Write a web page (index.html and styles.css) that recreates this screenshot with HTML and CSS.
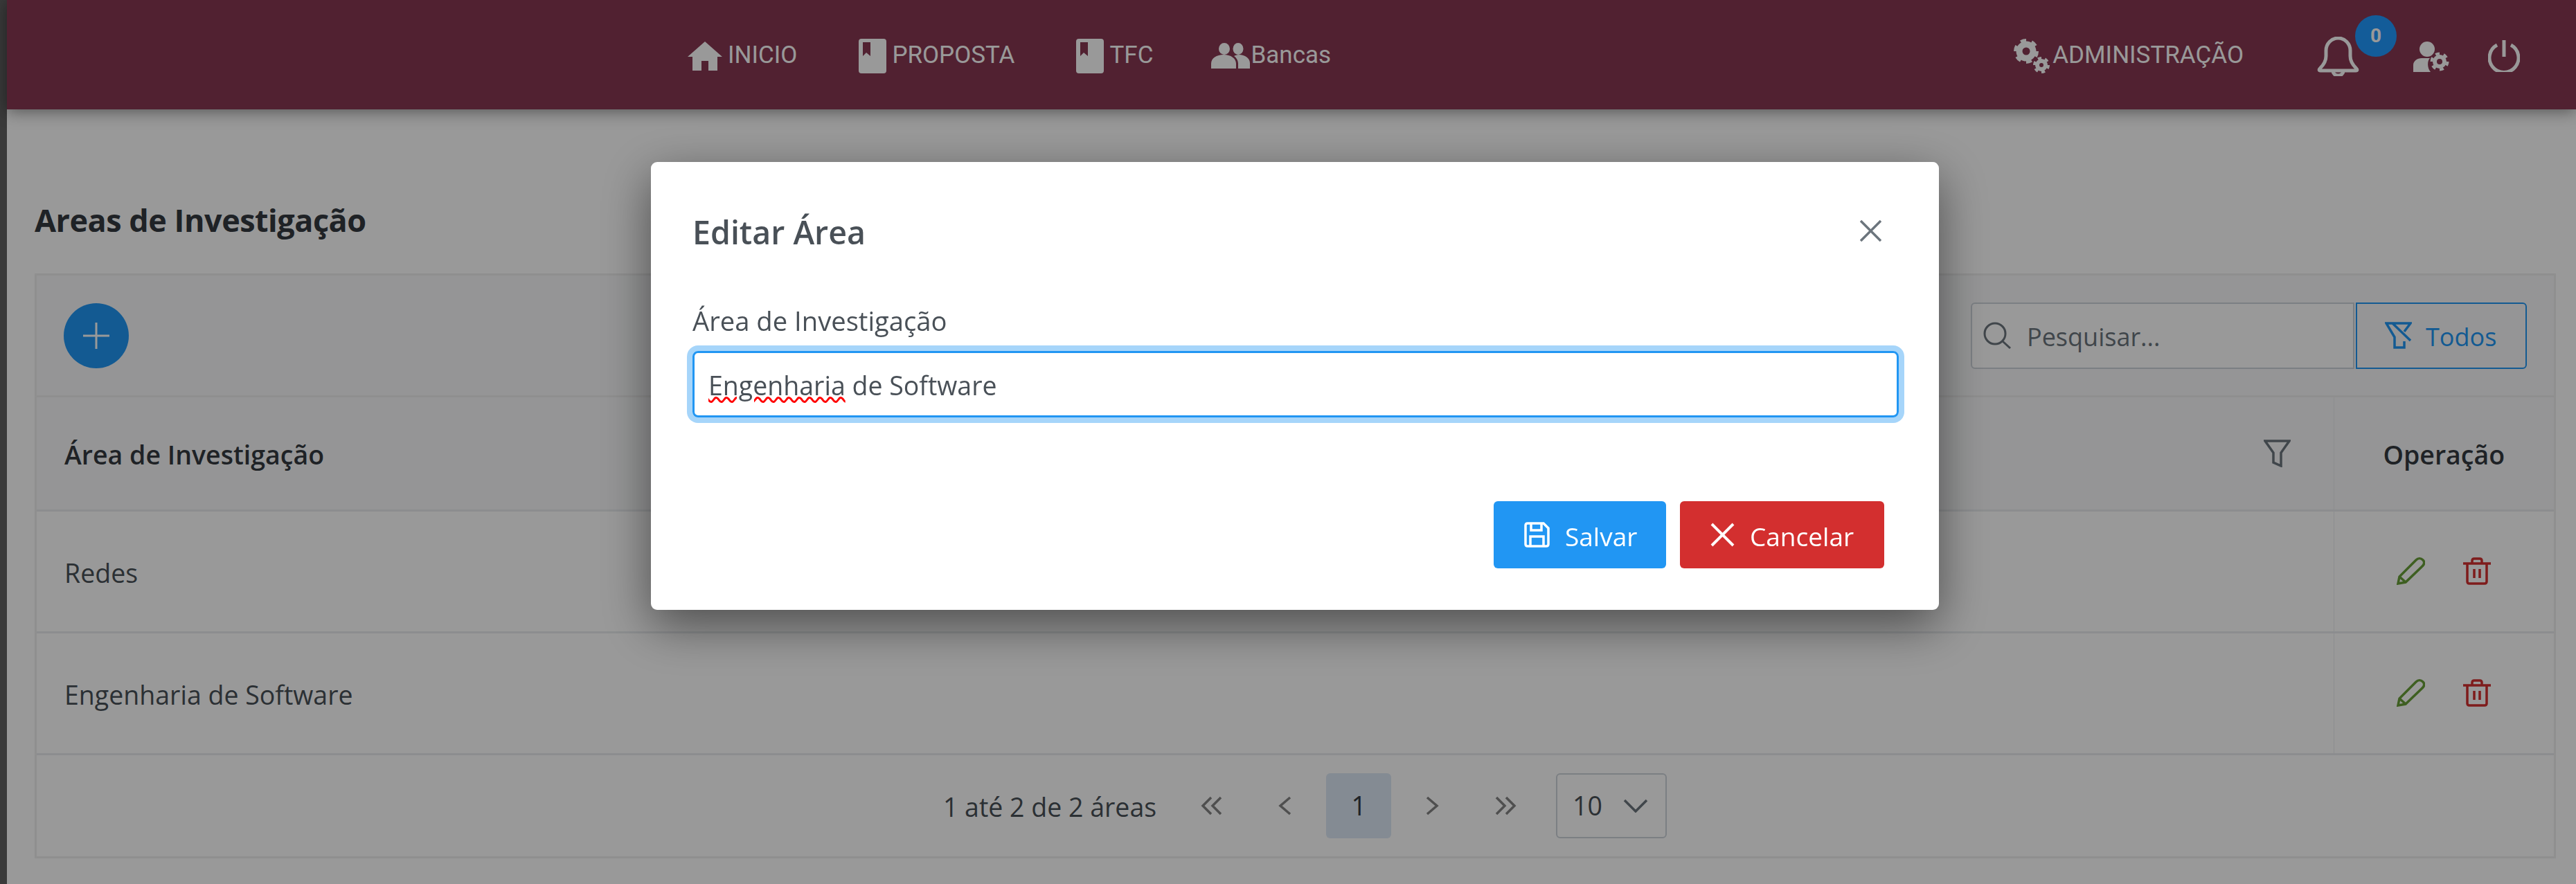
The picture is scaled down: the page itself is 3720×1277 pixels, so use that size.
FILE: index.html
```html
<!DOCTYPE html>
<html lang="en">
<head>
  <meta charset="UTF-8" />
  <title>Areas de Investigação</title>
  <link rel="stylesheet" href="styles.css">
</head>
<body>
  <div class="strip"></div>
  <div class="page">
    <nav class="navbar">
      <div class="nav-main">
        <a class="nav-item">
          <svg class="i-home" viewBox="0 0 50 42"><path d="M25 0 50 22H43V42H30V28H20V42H7V22H0Z"/></svg>
          <span>INICIO</span>
        </a>
        <a class="nav-item">
          <svg class="i-book" viewBox="0 0 40 50"><path fill-rule="evenodd" d="M4 0H36Q40 0 40 4V46Q40 50 36 50H4Q0 50 0 46V4Q0 0 4 0ZM6 5V25L11 20 17 25V5Z"/></svg>
          <span>PROPOSTA</span>
        </a>
        <a class="nav-item">
          <svg class="i-book" viewBox="0 0 40 50"><path fill-rule="evenodd" d="M4 0H36Q40 0 40 4V46Q40 50 36 50H4Q0 50 0 46V4Q0 0 4 0ZM6 5V25L11 20 17 25V5Z"/></svg>
          <span>TFC</span>
        </a>
        <a class="nav-item nav-bancas">
          <svg class="i-users" viewBox="0 0 57 37"><ellipse cx="19" cy="8.500" rx="8" ry="8.500"/><ellipse cx="39" cy="8.500" rx="7.500" ry="8.500"/><path d="M0 37V30C0 22 8 17 18 17S36 22 36 30V37ZM39 37V30C39 25 36 21 33 19 35 18 37 17 40 17 49 17 56 22 56 29V37Z"/></svg>
          <span>Bancas</span>
        </a>
      </div>
      <div class="nav-side">
        <a class="nav-item nav-admin">
          <svg class="i-gears" viewBox="0 0 52 50">
            <g class="gear"><circle cx="18" cy="18" r="10" stroke-width="9"/><circle class="teeth" cx="18" cy="18" r="15.500" stroke-width="5" pathLength="48" stroke-dasharray="4 4"/></g>
            <g class="gear"><circle cx="40" cy="38" r="6" stroke-width="6"/><circle class="teeth" cx="40" cy="38" r="10" stroke-width="4" pathLength="48" stroke-dasharray="4 4"/></g>
          </svg>
          <span>ADMINISTRAÇÃO</span>
        </a>
        <div class="bell">
          <svg class="i-bell" viewBox="0 0 61 57"><path d="M5 45C10 40 13 35 13 28V20C13 10 21 2 30.500 2S48 10 48 20V28C48 35 51 40 56 45 59 48 58 49 56 49H5C3 49 2 48 5 45ZM23 50A7.500 6 0 0 0 38 50"/></svg>
          <span class="badge">0</span>
        </div>
        <svg class="i-usercog" viewBox="0 0 52 44">
          <ellipse cx="20" cy="11" rx="11" ry="11"/>
          <path d="M0 44V34C0 28 6 24 12 24H24C20 28 20 38 25 44Z"/>
          <g class="gear"><circle cx="38" cy="29" r="7" stroke-width="6"/><circle class="teeth" cx="38" cy="29" r="11.500" stroke-width="4" pathLength="48" stroke-dasharray="4 4"/></g>
        </svg>
        <svg class="i-power" viewBox="0 0 46 46"><path d="M13 7A21 21 0 1 0 33 7M23 0V24"/></svg>
      </div>
    </nav>

    <main class="content">
      <h1 class="page-title">Areas de Investigação</h1>
      <section class="card">
        <div class="toolbar">
          <button class="btn-add">
            <svg viewBox="0 0 38 38"><path d="M19 0V38M0 19H38"/></svg>
          </button>
          <div class="search-group">
            <div class="search">
              <svg class="i-search" viewBox="0 0 41 39"><circle cx="17" cy="17" r="15"/><path d="M28 28 39 38"/></svg>
              <span>Pesquisar...</span>
            </div>
            <button class="btn-todos">
              <svg class="i-funnel" viewBox="0 0 39 39"><path d="M28 14 37 2H2L14 22V37H28V28M11 2 37 27"/></svg>
              <span>Todos</span>
            </button>
          </div>
        </div>
        <table class="grid">
          <thead>
            <tr>
              <th>
                <div class="th-inner">
                  <span>Área de Investigação</span>
                  <svg class="i-filter" viewBox="0 0 39 40"><path d="M2 2H37L25 19V38L14 33V19Z"/></svg>
                </div>
              </th>
              <th class="col-op">Operação</th>
            </tr>
          </thead>
          <tbody>
            <tr>
              <td>Redes</td>
              <td class="col-op">
                <div class="ops">
                  <svg class="i-pencil" viewBox="0 0 41 40"><path d="M2 38 4 28 28 4C31 1 35 1 38 4S40 10 37 13L13 36ZM4 28 13 36"/></svg>
                  <svg class="i-trash" viewBox="0 0 40 40"><path d="M0 9H40M6 9V35Q6 38 9 38H31Q34 38 34 35V9M13 9V5Q13 2 16 2H24Q27 2 27 5V9M16 17V30M24 17V30"/></svg>
                </div>
              </td>
            </tr>
            <tr>
              <td>Engenharia de Software</td>
              <td class="col-op">
                <div class="ops">
                  <svg class="i-pencil" viewBox="0 0 41 40"><path d="M2 38 4 28 28 4C31 1 35 1 38 4S40 10 37 13L13 36ZM4 28 13 36"/></svg>
                  <svg class="i-trash" viewBox="0 0 40 40"><path d="M0 9H40M6 9V35Q6 38 9 38H31Q34 38 34 35V9M13 9V5Q13 2 16 2H24Q27 2 27 5V9M16 17V30M24 17V30"/></svg>
                </div>
              </td>
            </tr>
          </tbody>
        </table>
        <div class="paginator">
          <span class="page-info">1 até 2 de 2 áreas</span>
          <a class="page-btn"><svg viewBox="0 0 32 32"><path d="M15 4 3 16 15 28M29 4 17 16 29 28"/></svg></a>
          <a class="page-btn"><svg viewBox="0 0 32 32"><path d="M23 4 9 16 23 28"/></svg></a>
          <a class="page-btn page-on">1</a>
          <a class="page-btn"><svg viewBox="0 0 32 32"><path d="M9 4 23 16 9 28"/></svg></a>
          <a class="page-btn"><svg viewBox="0 0 32 32"><path d="M3 4 15 16 3 28M17 4 29 16 17 28"/></svg></a>
          <div class="page-size">
            <span>10</span>
            <svg viewBox="0 0 36 20"><path d="M2 2 18 18 34 2"/></svg>
          </div>
        </div>
      </section>
    </main>
  </div>

  <div class="backdrop"></div>

  <div class="modal">
    <div class="modal-head">
      <h2 class="modal-title">Editar Área</h2>
      <svg class="i-close" viewBox="0 0 31 31"><path d="M1 1 30 30M30 1 1 30"/></svg>
    </div>
    <div class="modal-body">
      <label class="field-label">Área de Investigação</label>
      <div class="field-input"><span class="misspelt">Engenharia</span> de Software</div>
    </div>
    <div class="modal-foot">
      <button class="btn btn-save">
        <svg class="i-save" viewBox="0 0 37 37"><path d="M5 2H28L35 9V32Q35 35 32 35H5Q2 35 2 32V5Q2 2 5 2ZM10 2V12H25V2M9 35V21H28V35"/></svg>
        <span>Salvar</span>
      </button>
      <button class="btn btn-cancel">
        <svg class="i-x" viewBox="0 0 35 35"><path d="M2 2 33 33M33 2 2 33"/></svg>
        <span>Cancelar</span>
      </button>
    </div>
  </div>
</body>
</html>
```

FILE: styles.css
```css
* {
  box-sizing: border-box;
}
html, body {
  margin: 0;
  height: 100%;
}
body {
  display: flex;
  background: #fff;
  color: #495057;
  font-family: "Open Sans", "Noto Sans", sans-serif;
  font-size: 37.5px;
  overflow: hidden;
}
svg {
  display: block;
  flex: none;
}
button {
  font: inherit;
  border: none;
  padding: 0;
}

.strip {
  width: 10px;
  background: #616161;
  flex: none;
}
.page {
  flex: 1;
  min-width: 0;
}

/* navbar */
.navbar {
  height: 158px;
  background: #883752;
  box-shadow: 0 3px 22px rgba(0,0,0,0.45);
  display: flex;
  align-items: center;
  justify-content: space-between;
  padding: 0 81px 0 983px;
  color: #fff;
  fill: #fff;
  font-family: Roboto, sans-serif;
  font-size: 35px;
}
.nav-main, .nav-side {
  display: flex;
  align-items: center;
}
.nav-main {
  gap: 89px;
}
.nav-item {
  display: flex;
  align-items: center;
  gap: 8px;
}
.nav-bancas {
  margin-left: -5px;
  gap: 0;
}
.i-home {
  width: 50px;
  height: 42px;
  margin-top: 4px;
}
.i-book {
  width: 40px;
  height: 50px;
  margin-top: 4px;
}
.i-users {
  width: 57px;
  height: 37px;
  margin-top: 2px;
}
.i-gears {
  width: 52px;
  height: 50px;
  margin-top: 4px;
}
.nav-admin {
  gap: 4px;
}
.gear circle {
  fill: none;
  stroke: #fff;
}
.bell {
  margin-left: 106px;
  position: relative;
  height: 57px;
  margin-top: 4px;
}
.i-bell {
  width: 61px;
  height: 57px;
  fill: none;
  stroke: #fff;
  stroke-width: 5;
}
.badge {
  position: absolute;
  left: 55px;
  top: -31px;
  width: 60px;
  height: 60px;
  border-radius: 50%;
  background: #2099ff;
  font-size: 28px;
  font-weight: 700;
  display: flex;
  align-items: center;
  justify-content: center;
}
.i-usercog {
  width: 52px;
  height: 44px;
  margin-left: 78px;
  margin-top: 6px;
}
.i-power {
  width: 46px;
  height: 46px;
  margin-left: 56px;
  margin-top: 4px;
  fill: none;
  stroke: #fff;
  stroke-width: 5;
}

/* content */
.content {
  padding: 0 29px 0 40px;
}
.page-title {
  margin: 0;
  height: 237px;
  padding-top: 128px;
  font-size: 45px;
  font-weight: 700;
  line-height: 64px;
  color: #343a40;
  letter-spacing: -0.5px;
}
.card {
  border: 3px solid #eee;
}
.toolbar {
  height: 176px;
  background: #f8f9fa;
  border-bottom: 3px solid #eee;
  display: flex;
  align-items: center;
  justify-content: space-between;
  padding: 0 39px;
}
.btn-add {
  width: 94px;
  height: 94px;
  border-radius: 50%;
  background: #2196f3;
  display: flex;
  align-items: center;
  justify-content: center;
}
.btn-add svg {
  width: 38px;
  height: 38px;
  fill: none;
  stroke: #fff;
  stroke-width: 3;
}
.search-group {
  display: flex;
  gap: 2px;
  font-size: 36px;
}
.search {
  width: 554px;
  height: 96px;
  border: 2px solid #ced4da;
  border-radius: 6px 0 0 6px;
  background: #fff;
  display: flex;
  align-items: center;
  gap: 22px;
  padding-left: 16px;
  color: #6c757d;
}
.search span, .btn-todos span {
  padding-top: 3px;
}
.i-search {
  width: 41px;
  height: 39px;
  fill: none;
  stroke: #6c757d;
  stroke-width: 3;
}
.btn-todos {
  width: 247px;
  height: 96px;
  border: 2px solid #2196f3;
  border-radius: 0 6px 6px 0;
  background: transparent;
  color: #2196f3;
  display: flex;
  align-items: center;
  gap: 20px;
  padding-left: 40px;
}
.i-funnel {
  width: 39px;
  height: 39px;
  fill: none;
  stroke: #2196f3;
  stroke-width: 3.500;
}

/* table */
.grid {
  width: 100%;
  border-collapse: collapse;
}
.grid th, .grid td {
  padding: 4px 40px 0;
  text-align: left;
  border-bottom: 3px solid #e9ecef;
}
.grid th {
  height: 163px;
  background: #f8f9fa;
  color: #343a40;
  font-weight: 600;
}
.grid td {
  height: 176px;
}
.grid .col-op {
  width: 318px;
  padding: 4px 0 0;
  text-align: center;
  border-left: 1px solid #e9ecef;
}
.th-inner {
  display: flex;
  align-items: center;
  justify-content: space-between;
  padding-right: 22px;
}
.i-filter {
  width: 39px;
  height: 40px;
  margin-top: -4px;
  fill: none;
  stroke: #6c757d;
  stroke-width: 3.500;
}
.ops {
  display: flex;
  justify-content: center;
  gap: 55px;
  margin-top: -4px;
}
.i-pencil {
  width: 41px;
  height: 40px;
  fill: none;
  stroke: #689f38;
  stroke-width: 3.500;
}
.i-trash {
  width: 40px;
  height: 40px;
  fill: none;
  stroke: #d32f2f;
  stroke-width: 3.500;
}

/* paginator */
.paginator {
  height: 146px;
  display: flex;
  align-items: center;
  justify-content: center;
  gap: 12px;
  padding-left: 28px;
}
.page-info {
  margin-right: 21px;
  padding-top: 3px;
}
.page-btn {
  width: 94px;
  height: 94px;
  border-radius: 6px;
  display: flex;
  align-items: center;
  justify-content: center;
  color: #495057;
}
.page-btn svg {
  width: 32px;
  height: 32px;
  fill: none;
  stroke: #848484;
  stroke-width: 3.500;
}
.page-on {
  background: #dce8f5;
  color: #343a40;
}
.page-size {
  width: 160px;
  height: 94px;
  margin-left: 14px;
  border: 2px solid #ced4da;
  border-radius: 6px;
  display: flex;
  align-items: center;
  gap: 30px;
  padding-left: 22px;
}
.page-size svg {
  width: 36px;
  height: 20px;
  fill: none;
  stroke: #6c757d;
  stroke-width: 3.500;
}

/* modal */
.backdrop {
  position: fixed;
  inset: 0;
  background: rgba(0,0,0,0.4);
}
.modal {
  position: fixed;
  left: 940px;
  top: 234px;
  width: 1860px;
  background: #fff;
  border-radius: 9px;
  box-shadow: 0 22px 70px rgba(0,0,0,0.5);
}
.modal-head {
  height: 198px;
  display: flex;
  align-items: center;
  justify-content: space-between;
  padding: 0 83px 0 60px;
}
.modal-title {
  margin: 0;
  padding-top: 3px;
  font-size: 46.5px;
  font-weight: 600;
  color: #495057;
}
.i-close {
  width: 31px;
  height: 31px;
  fill: none;
  stroke: #6c757d;
  stroke-width: 3.500;
}
.modal-body {
  padding: 0 58px 0 60px;
}
.field-label {
  display: block;
  height: 60px;
  line-height: 62px;
  margin-bottom: 15px;
  font-size: 38.2px;
}
.field-input {
  height: 96px;
  line-height: 94px;
  border: 3px solid #2196f3;
  border-radius: 8px;
  box-shadow: 0 0 0 8px #a6d5fa;
  padding-left: 20px;
}
.misspelt {
  text-decoration: underline wavy #f00 2.500px;
}
.modal-foot {
  display: flex;
  justify-content: flex-end;
  gap: 20px;
  padding: 121px 79px 60px 0;
  font-size: 37px;
}
.btn {
  height: 97px;
  border-radius: 6px;
  color: #fff;
  display: flex;
  align-items: center;
  gap: 22px;
}
.btn span {
  padding-top: 3px;
}
.btn-save {
  width: 249px;
  background: #2196f3;
  padding-left: 44px;
}
.btn-cancel {
  width: 295px;
  background: #d32f2f;
  padding-left: 44px;
}
.i-save {
  width: 37px;
  height: 37px;
  fill: none;
  stroke: #fff;
  stroke-width: 3.500;
}
.i-x {
  width: 35px;
  height: 35px;
  fill: none;
  stroke: #fff;
  stroke-width: 4;
}
```
